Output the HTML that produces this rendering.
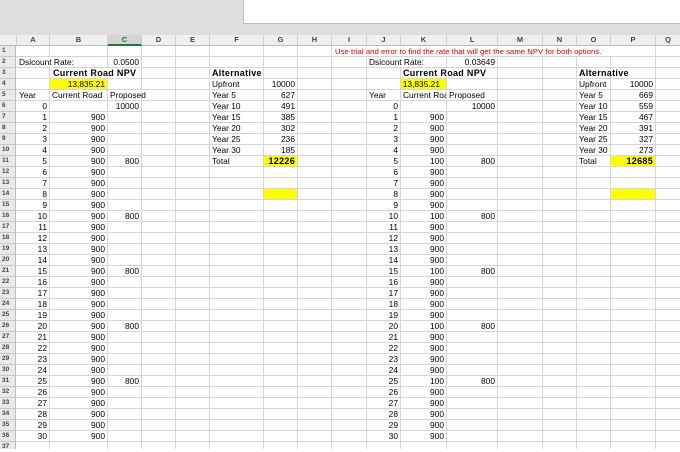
<!DOCTYPE html>
<html><head><meta charset="utf-8"><style>
*{margin:0;padding:0;box-sizing:border-box}
body{width:680px;height:449px;overflow:hidden;background:#fff;position:relative;font-family:"Liberation Sans",Arial,sans-serif;font-size:8.4px;color:#000}
#top{position:absolute;left:0;top:0;width:680px;height:35px;background:#dedede}
#box{position:absolute;left:243px;top:0;width:437px;height:24px;background:#fff;border-left:1px solid #bcbcbc;border-bottom:1px solid #bcbcbc}
#hdr{position:absolute;left:0;top:35px;width:680px;height:11px;background:#efefef;border-bottom:1px solid #bdbdbd}
#hdr b{position:absolute;top:0;height:10px;line-height:10px;text-align:center;font-size:7.5px;font-weight:bold;color:#444;border-right:1px solid #cfcfcf}
#grid{position:absolute;left:0;top:46px;width:680px;height:403px;background:repeating-linear-gradient(to bottom,transparent 0,transparent 10px,#d6d6d6 10px,#d6d6d6 11px)}
.v{position:absolute;top:46px;height:403px;width:1px;background:#d6d6d6}
#rh{position:absolute;left:0;top:46px;width:16px;height:403px;background:repeating-linear-gradient(to bottom,#e9e9e9 0,#e9e9e9 10px,#c8c8c8 10px,#c8c8c8 11px);border-right:1px solid #bdbdbd}
.rn{position:absolute;left:2px;width:12px;height:10px;line-height:10px;font-size:6.5px;font-weight:bold;color:#444}
.m{position:absolute;background:#fff}
.y{position:absolute;background:#ffff00}
.w{position:absolute;left:0;width:680px;height:10px;line-height:11px}
.w i{position:absolute;font-style:normal;white-space:nowrap;top:0}
.r{text-align:right}
.bd{font-weight:bold;letter-spacing:0.3px;font-size:9px}
.red{color:#e00000;font-size:7.7px;letter-spacing:0.05px}
</style></head><body>
<div id="top"></div><div id="box"></div>
<div id="hdr">
<b style="left:0;width:17px"></b>
<b style="left:17px;width:33px">A</b>
<b style="left:50px;width:58px">B</b>
<b style="left:108px;width:34px;background:#d3d3d3;color:#217346;border-bottom:2px solid #217346;height:11px">C</b>
<b style="left:142px;width:34px">D</b>
<b style="left:176px;width:34px">E</b>
<b style="left:210px;width:54px">F</b>
<b style="left:264px;width:34px">G</b>
<b style="left:298px;width:34px">H</b>
<b style="left:332px;width:35px">I</b>
<b style="left:367px;width:34px">J</b>
<b style="left:401px;width:46px">K</b>
<b style="left:447px;width:51px">L</b>
<b style="left:498px;width:45px">M</b>
<b style="left:543px;width:34px">N</b>
<b style="left:577px;width:34px">O</b>
<b style="left:611px;width:45px">P</b>
<b style="left:656px;width:24px;border:0">Q</b>
</div>
<div id="grid"></div>
<div class="v" style="left:49px"></div><div class="v" style="left:107px"></div><div class="v" style="left:141px"></div><div class="v" style="left:175px"></div><div class="v" style="left:209px"></div><div class="v" style="left:263px"></div><div class="v" style="left:297px"></div><div class="v" style="left:331px"></div><div class="v" style="left:366px"></div><div class="v" style="left:400px"></div><div class="v" style="left:446px"></div><div class="v" style="left:497px"></div><div class="v" style="left:542px"></div><div class="v" style="left:576px"></div><div class="v" style="left:610px"></div><div class="v" style="left:655px"></div>
<div class="m" style="left:332px;top:46px;width:323px;height:10px"></div>
<div class="m" style="left:49px;top:57px;width:1px;height:10px"></div>
<div class="m" style="left:400px;top:57px;width:1px;height:10px"></div>
<div class="m" style="left:107px;top:68px;width:1px;height:10px"></div>
<div class="m" style="left:446px;top:68px;width:1px;height:10px"></div>
<div class="y" style="left:50px;top:79px;width:57px;height:10px"></div>
<div class="y" style="left:401px;top:79px;width:45px;height:10px"></div>
<div class="y" style="left:264px;top:156px;width:33px;height:10px"></div>
<div class="y" style="left:264px;top:189px;width:33px;height:10px"></div>
<div class="y" style="left:611px;top:156px;width:44px;height:10px"></div>
<div class="y" style="left:611px;top:189px;width:44px;height:10px"></div>
<div id="rh">
<div class="rn" style="top:0">1</div><div class="rn" style="top:11px">2</div><div class="rn" style="top:22px">3</div><div class="rn" style="top:33px">4</div><div class="rn" style="top:44px">5</div><div class="rn" style="top:55px">6</div><div class="rn" style="top:66px">7</div><div class="rn" style="top:77px">8</div><div class="rn" style="top:88px">9</div><div class="rn" style="top:99px">10</div><div class="rn" style="top:110px">11</div><div class="rn" style="top:121px">12</div><div class="rn" style="top:132px">13</div><div class="rn" style="top:143px">14</div><div class="rn" style="top:154px">15</div><div class="rn" style="top:165px">16</div><div class="rn" style="top:176px">17</div><div class="rn" style="top:187px">18</div><div class="rn" style="top:198px">19</div><div class="rn" style="top:209px">20</div><div class="rn" style="top:220px">21</div><div class="rn" style="top:231px">22</div><div class="rn" style="top:242px">23</div><div class="rn" style="top:253px">24</div><div class="rn" style="top:264px">25</div><div class="rn" style="top:275px">26</div><div class="rn" style="top:286px">27</div><div class="rn" style="top:297px">28</div><div class="rn" style="top:308px">29</div><div class="rn" style="top:319px">30</div><div class="rn" style="top:330px">31</div><div class="rn" style="top:341px">32</div><div class="rn" style="top:352px">33</div><div class="rn" style="top:363px">34</div><div class="rn" style="top:374px">35</div><div class="rn" style="top:385px">36</div><div class="rn" style="top:396px">37</div>
</div>

<div class="w" style="top:46px"><i class="red" style="left:335px">Use trial and error to find the rate that will get the same NPV for both options.</i></div>
<div class="w" style="top:57px"><i style="left:19px">Dsicount Rate:</i><i class="r" style="right:541px">0.0500</i><i style="left:369px">Dsicount Rate:</i><i class="r" style="right:185px">0.03649</i></div>
<div class="w" style="top:68px"><i class="bd" style="left:53px">Current Road NPV</i><i class="bd" style="left:212px">Alternative</i><i class="bd" style="left:403px">Current Road NPV</i><i class="bd" style="left:579px">Alternative</i></div>
<div class="w" style="top:79px"><i class="r" style="right:575px">13,835.21</i><i class="r" style="right:240px">13,835.21</i><i style="left:212px">Upfront</i><i class="r" style="right:385px">10000</i><i style="left:579px">Upfront</i><i class="r" style="right:27px">10000</i></div>
<div class="w" style="top:90px"><i style="left:19px">Year</i><i style="left:52px">Current Road</i><i style="left:110px">Proposed</i><i style="left:212px">Year 5</i><i class="r" style="right:385px">627</i><i style="left:369px">Year</i><i style="left:403px;width:43px;overflow:hidden">Current Road</i><i style="left:449px">Proposed</i><i style="left:579px">Year 5</i><i class="r" style="right:27px">669</i></div>
<div class="w" style="top:101px"><i class="r" style="right:633px">0</i><i class="r" style="right:541px">10000</i><i style="left:212px">Year 10</i><i class="r" style="right:385px">491</i><i class="r" style="right:282px">0</i><i class="r" style="right:185px">10000</i><i style="left:579px">Year 10</i><i class="r" style="right:27px">559</i></div>
<div class="w" style="top:112px"><i class="r" style="right:633px">1</i><i class="r" style="right:575px">900</i><i style="left:212px">Year 15</i><i class="r" style="right:385px">385</i><i class="r" style="right:282px">1</i><i class="r" style="right:236px">900</i><i style="left:579px">Year 15</i><i class="r" style="right:27px">467</i></div>
<div class="w" style="top:123px"><i class="r" style="right:633px">2</i><i class="r" style="right:575px">900</i><i style="left:212px">Year 20</i><i class="r" style="right:385px">302</i><i class="r" style="right:282px">2</i><i class="r" style="right:236px">900</i><i style="left:579px">Year 20</i><i class="r" style="right:27px">391</i></div>
<div class="w" style="top:134px"><i class="r" style="right:633px">3</i><i class="r" style="right:575px">900</i><i style="left:212px">Year 25</i><i class="r" style="right:385px">236</i><i class="r" style="right:282px">3</i><i class="r" style="right:236px">900</i><i style="left:579px">Year 25</i><i class="r" style="right:27px">327</i></div>
<div class="w" style="top:145px"><i class="r" style="right:633px">4</i><i class="r" style="right:575px">900</i><i style="left:212px">Year 30</i><i class="r" style="right:385px">185</i><i class="r" style="right:282px">4</i><i class="r" style="right:236px">900</i><i style="left:579px">Year 30</i><i class="r" style="right:27px">273</i></div>
<div class="w" style="top:156px"><i class="r" style="right:633px">5</i><i class="r" style="right:575px">900</i><i class="r" style="right:541px">800</i><i style="left:212px">Total</i><i class="r bd" style="right:385px">12226</i><i class="r" style="right:282px">5</i><i class="r" style="right:236px">100</i><i class="r" style="right:185px">800</i><i style="left:579px">Total</i><i class="r bd" style="right:27px">12685</i></div>
<div class="w" style="top:167px"><i class="r" style="right:633px">6</i><i class="r" style="right:575px">900</i><i class="r" style="right:282px">6</i><i class="r" style="right:236px">900</i></div>
<div class="w" style="top:178px"><i class="r" style="right:633px">7</i><i class="r" style="right:575px">900</i><i class="r" style="right:282px">7</i><i class="r" style="right:236px">900</i></div>
<div class="w" style="top:189px"><i class="r" style="right:633px">8</i><i class="r" style="right:575px">900</i><i class="r" style="right:282px">8</i><i class="r" style="right:236px">900</i></div>
<div class="w" style="top:200px"><i class="r" style="right:633px">9</i><i class="r" style="right:575px">900</i><i class="r" style="right:282px">9</i><i class="r" style="right:236px">900</i></div>
<div class="w" style="top:211px"><i class="r" style="right:633px">10</i><i class="r" style="right:575px">900</i><i class="r" style="right:541px">800</i><i class="r" style="right:282px">10</i><i class="r" style="right:236px">100</i><i class="r" style="right:185px">800</i></div>
<div class="w" style="top:222px"><i class="r" style="right:633px">11</i><i class="r" style="right:575px">900</i><i class="r" style="right:282px">11</i><i class="r" style="right:236px">900</i></div>
<div class="w" style="top:233px"><i class="r" style="right:633px">12</i><i class="r" style="right:575px">900</i><i class="r" style="right:282px">12</i><i class="r" style="right:236px">900</i></div>
<div class="w" style="top:244px"><i class="r" style="right:633px">13</i><i class="r" style="right:575px">900</i><i class="r" style="right:282px">13</i><i class="r" style="right:236px">900</i></div>
<div class="w" style="top:255px"><i class="r" style="right:633px">14</i><i class="r" style="right:575px">900</i><i class="r" style="right:282px">14</i><i class="r" style="right:236px">900</i></div>
<div class="w" style="top:266px"><i class="r" style="right:633px">15</i><i class="r" style="right:575px">900</i><i class="r" style="right:541px">800</i><i class="r" style="right:282px">15</i><i class="r" style="right:236px">100</i><i class="r" style="right:185px">800</i></div>
<div class="w" style="top:277px"><i class="r" style="right:633px">16</i><i class="r" style="right:575px">900</i><i class="r" style="right:282px">16</i><i class="r" style="right:236px">900</i></div>
<div class="w" style="top:288px"><i class="r" style="right:633px">17</i><i class="r" style="right:575px">900</i><i class="r" style="right:282px">17</i><i class="r" style="right:236px">900</i></div>
<div class="w" style="top:299px"><i class="r" style="right:633px">18</i><i class="r" style="right:575px">900</i><i class="r" style="right:282px">18</i><i class="r" style="right:236px">900</i></div>
<div class="w" style="top:310px"><i class="r" style="right:633px">19</i><i class="r" style="right:575px">900</i><i class="r" style="right:282px">19</i><i class="r" style="right:236px">900</i></div>
<div class="w" style="top:321px"><i class="r" style="right:633px">20</i><i class="r" style="right:575px">900</i><i class="r" style="right:541px">800</i><i class="r" style="right:282px">20</i><i class="r" style="right:236px">100</i><i class="r" style="right:185px">800</i></div>
<div class="w" style="top:332px"><i class="r" style="right:633px">21</i><i class="r" style="right:575px">900</i><i class="r" style="right:282px">21</i><i class="r" style="right:236px">900</i></div>
<div class="w" style="top:343px"><i class="r" style="right:633px">22</i><i class="r" style="right:575px">900</i><i class="r" style="right:282px">22</i><i class="r" style="right:236px">900</i></div>
<div class="w" style="top:354px"><i class="r" style="right:633px">23</i><i class="r" style="right:575px">900</i><i class="r" style="right:282px">23</i><i class="r" style="right:236px">900</i></div>
<div class="w" style="top:365px"><i class="r" style="right:633px">24</i><i class="r" style="right:575px">900</i><i class="r" style="right:282px">24</i><i class="r" style="right:236px">900</i></div>
<div class="w" style="top:376px"><i class="r" style="right:633px">25</i><i class="r" style="right:575px">900</i><i class="r" style="right:541px">800</i><i class="r" style="right:282px">25</i><i class="r" style="right:236px">100</i><i class="r" style="right:185px">800</i></div>
<div class="w" style="top:387px"><i class="r" style="right:633px">26</i><i class="r" style="right:575px">900</i><i class="r" style="right:282px">26</i><i class="r" style="right:236px">900</i></div>
<div class="w" style="top:398px"><i class="r" style="right:633px">27</i><i class="r" style="right:575px">900</i><i class="r" style="right:282px">27</i><i class="r" style="right:236px">900</i></div>
<div class="w" style="top:409px"><i class="r" style="right:633px">28</i><i class="r" style="right:575px">900</i><i class="r" style="right:282px">28</i><i class="r" style="right:236px">900</i></div>
<div class="w" style="top:420px"><i class="r" style="right:633px">29</i><i class="r" style="right:575px">900</i><i class="r" style="right:282px">29</i><i class="r" style="right:236px">900</i></div>
<div class="w" style="top:431px"><i class="r" style="right:633px">30</i><i class="r" style="right:575px">900</i><i class="r" style="right:282px">30</i><i class="r" style="right:236px">900</i></div>
</body></html>
